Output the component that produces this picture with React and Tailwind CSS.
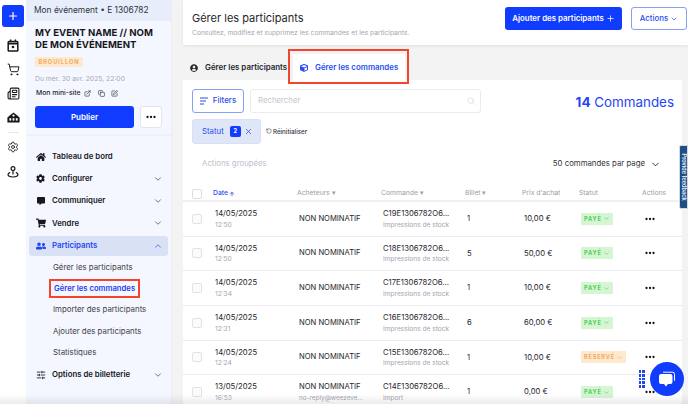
import React from "react";
import { ChevronDown, ChevronUp, Plus, ShoppingCart, Newspaper, Settings, SlidersHorizontal, ExternalLink, Copy, SquarePen, Ellipsis, X, RotateCcw, Search, ArrowUp } from "lucide-react";
import { FaHome, FaCog, FaCommentAlt, FaShoppingCart, FaUserFriends, FaUserCircle, FaCube } from "react-icons/fa";

const font = { fontFamily: '"Inter","Noto Sans",sans-serif' };

function CalIcon() {
  return (
    <svg width="12" height="13" viewBox="0 0 12 13" fill="none" stroke="#17171c" strokeWidth="1.5">
      <rect x="1.2" y="2.4" width="9.6" height="9.6" rx="0.8" />
      <path d="M1 4.6h10" strokeWidth="1.8" />
      <path d="M3.6 0.6v2.4M8.4 0.6v2.4" />
      <circle cx="6" cy="8" r="1.3" fill="#17171c" stroke="none" />
    </svg>
  );
}

function VenueIcon() {
  return (
    <svg width="13" height="11" viewBox="0 0 13 11">
      <path d="M6.5 0.4L10 3.2 12.6 5.4V10.6H0.4V5.4L3 3.2z" fill="#17171c" />
      <circle cx="6.5" cy="3.6" r="1.1" fill="#fff" />
      <rect x="2.4" y="6.2" width="1.8" height="2.4" fill="#fff" />
      <rect x="5.6" y="6.2" width="1.8" height="2.4" fill="#fff" />
      <rect x="8.8" y="6.2" width="1.8" height="2.4" fill="#fff" />
    </svg>
  );
}

function PinIcon() {
  return (
    <svg width="12" height="12" viewBox="0 0 12 12" fill="none" stroke="#17171c" strokeWidth="1.2">
      <circle cx="6" cy="2.6" r="1.9" />
      <path d="M6 4.5V8.4" />
      <path d="M3.2 6.4C1.6 7 1 7.8 1 8.6 1 10 3.2 11 6 11s5-1 5-2.4c0-.8-.6-1.6-2.2-2.2" />
    </svg>
  );
}

function NavRow({ icon, label, active, open }) {
  return (
    <div className={`h-[20px] mx-[3px] flex items-center pl-[6px] pr-[5px] rounded-[3px] whitespace-nowrap ${active ? "bg-[#d9e1f4] text-[#1f45f5]" : "text-[#17171c]"}`}>
      <span className="w-[11px] flex justify-center">{icon}</span>
      <span className="ml-[6px] flex-1 text-[7.8px] font-semibold">{label}</span>
      {open ? <ChevronUp size={10} strokeWidth={1.6} /> : <ChevronDown size={10} strokeWidth={1.6} className="text-[#333]" />}
    </div>
  );
}

function Sub({ children, active }) {
  return (
    <div className={`h-[21.4px] flex items-center pl-[27px] whitespace-nowrap ${active ? "text-[7.7px] text-[#2a3df0] font-semibold" : "text-[7.85px] text-[#3f3f46]"}`}>
      {active ? (
        <span className="h-[19px] -ml-[4px] pl-[3px] pr-[3px] flex items-center border-2 border-[#f4442e]">{children}</span>
      ) : children}
    </div>
  );
}

function Sidebar() {
  return (
    <aside className="w-[172px] shrink-0 flex bg-white border-r border-[#ececf1]">
      <div className="w-[26px] shrink-0 flex flex-col items-center bg-white">
        <div className="mt-[5px] w-[22px] h-[22px] rounded-[3px] bg-[#0f3cff] text-white flex items-center justify-center">
          <Plus size={12} strokeWidth={2.4} />
        </div>
        <div className="mt-[12px] h-[13px] flex items-center"><CalIcon /></div>
        <div className="mt-[11px] h-[13px] flex items-center text-[#17171c]"><ShoppingCart size={13} strokeWidth={1.8} /></div>
        <div className="mt-[11px] h-[13px] flex items-center text-[#17171c]"><Newspaper size={13} strokeWidth={2} /></div>
        <div className="mt-[11px] h-[13px] flex items-center"><VenueIcon /></div>
        <div className="mt-[8px] w-[11px] h-px bg-[#e8e8ec]" />
        <div className="mt-[7px] h-[13px] flex items-center text-[#17171c]"><Settings size={12} strokeWidth={1.7} /></div>
        <div className="mt-[12px] h-[13px] flex items-center"><PinIcon /></div>
      </div>
      <div className="flex-1 min-w-0 bg-[#f4f7ff] flex flex-col">
        <div className="h-[21px] bg-[#e8edfb] flex items-center pl-[8px] text-[8.4px] text-[#33343b] whitespace-nowrap">Mon événement • E 1306782</div>
        <div className="h-[115px] px-[9px] border-b-2 border-[#eff1f8]">
          <div className="mt-[6px] text-[9.6px] leading-[11.5px] font-bold text-[#17171c] whitespace-nowrap">MY EVENT NAME // NOM<br />DE MON ÉVÉNEMENT</div>
          <div className="mt-[7px] w-[48px] h-[10px] bg-[#fde8d0] rounded-[1px] flex items-center justify-center text-[5.6px] font-bold tracking-[1px] text-[#f5ab54]">BROUILLON</div>
          <div className="mt-[7px] text-[6.8px] text-[#a7a9b5]">Du mer. 30 avr. 2025, 22:00</div>
          <div className="mt-[4px] flex items-center text-[6.8px] text-[#26262c] font-medium pl-px">
            Mon mini-site
            <ExternalLink size={7} className="ml-[3px]" />
            <Copy size={7} className="ml-[7px]" />
            <SquarePen size={7} className="ml-[6px]" />
          </div>
          <div className="mt-[8px] flex gap-[6px]">
            <div className="w-[99px] h-[22px] rounded-[3px] bg-[#0f3cff] text-white text-[8px] font-semibold flex items-center justify-center">Publier</div>
            <div className="w-[22px] h-[22px] rounded-[3px] bg-white border border-[#e4e4ea] text-[#111] flex items-center justify-center">
              <Ellipsis size={12} strokeWidth={2.6} />
            </div>
          </div>
        </div>
        <div className="mt-[10.5px] flex flex-col gap-[2.3px]">
          <div className="h-[20px] mx-[3px] flex items-center pl-[6px] text-[#17171c] whitespace-nowrap">
            <span className="w-[11px] flex justify-center"><FaHome size={10} /></span>
            <span className="ml-[6px] text-[7.8px] font-semibold">Tableau de bord</span>
          </div>
          <NavRow icon={<FaCog size={9} />} label="Configurer" />
          <NavRow icon={<FaCommentAlt size={8} />} label="Communiquer" />
          <NavRow icon={<FaShoppingCart size={10} />} label="Vendre" />
          <NavRow icon={<FaUserFriends size={10} />} label="Participants" active open />
        </div>
        <div className="mt-[1px]">
          <Sub>Gérer les participants</Sub>
          <Sub active>Gérer les commandes</Sub>
          <Sub>Importer des participants</Sub>
          <Sub>Ajouter des participants</Sub>
          <Sub>Statistiques</Sub>
        </div>
        <div className="mt-[1px]"><NavRow icon={<SlidersHorizontal size={10} />} label="Options de billetterie" /></div>
      </div>
    </aside>
  );
}

function Header() {
  return (
    <header className="h-[45px] bg-white flex items-start justify-between shadow-[0_1px_3px_rgba(0,0,0,0.08)] relative">
      <div className="pl-[9px]">
        <div className="mt-[11px] text-[11px] leading-[15px] text-[#26262c] whitespace-nowrap">Gérer les participants</div>
        <div className="mt-[3px] text-[6.7px] leading-[9px] text-[#a4a5b0] whitespace-nowrap">Consultez, modifiez et supprimez les commandes et les participants.</div>
      </div>
      <div className="mt-[7px] mr-[1px] flex gap-[9px]">
        <div className="w-[117px] h-[23px] rounded-[3px] bg-[#0f3cff] text-white text-[7.9px] font-semibold flex items-center justify-center gap-[2px] whitespace-nowrap">Ajouter des participants<Plus size={9} /></div>
        <div className="w-[56px] h-[23px] rounded-[3px] border border-[#86a0f8] bg-white text-[#2a4df0] text-[7.9px] font-medium flex items-center justify-center gap-[2px]">Actions<ChevronDown size={8} /></div>
      </div>
    </header>
  );
}

const head = "-ml-[2px] text-[6.8px] text-[#9b9ca8] whitespace-nowrap";

const rows = [
  ["14/05/2025", "12:50", "C19E1306782O6...", "Impressions de stock", "1", "10,00 €", "PAYÉ", ""],
  ["14/05/2025", "12:50", "C18E1306782O6...", "Impressions de stock", "5", "50,00 €", "PAYÉ", ""],
  ["14/05/2025", "12:34", "C17E1306782O6...", "Impressions de stock", "1", "10,00 €", "PAYÉ", ""],
  ["14/05/2025", "12:31", "C16E1306782O6...", "Impressions de stock", "6", "60,00 €", "PAYÉ", ""],
  ["14/05/2025", "12:24", "C15E1306782O6...", "Impressions de stock", "1", "10,00 €", "RÉSERVÉ", ""],
  ["13/05/2025", "16:53", "C14E1306782O6...", "Import", "1", "0,00 €", "PAYÉ", "no-reply@weezeve..."],
];

const cols = "grid grid-cols-[32px_84px_84px_84px_57px_57px_63px_1fr] items-center";

function Row({ r }) {
  const paid = r[6] === "PAYÉ";
  return (
    <div className={`${cols} h-[34.67px] border-b border-[#ebebef]`}>
      <div className="pl-[9px]"><span className="block w-[10px] h-[10px] rounded-[2px] border border-[#e2e2e8] bg-[#fbfbfc]" /></div>
      <div>
        <div className="text-[7.7px] leading-[10px] text-[#26262c]">{r[0]}</div>
        <div className="mt-[1.5px] text-[6.6px] leading-[8px] text-[#a4a5b0]">{r[1]}</div>
      </div>
      <div>
        <div className="text-[7.6px] leading-[10px] text-[#26262c] whitespace-nowrap">NON NOMINATIF</div>
        {r[7] && <div className="mt-[1.5px] text-[6.4px] leading-[8px] text-[#a4a5b0] whitespace-nowrap">{r[7]}</div>}
      </div>
      <div>
        <div className="text-[7.7px] leading-[10px] text-[#26262c] whitespace-nowrap">{r[2]}</div>
        <div className="mt-[1.5px] text-[6.6px] leading-[8px] text-[#a4a5b0] whitespace-nowrap">{r[3]}</div>
      </div>
      <div className="text-[7.7px] text-[#26262c]">{r[4]}</div>
      <div className="text-[7.7px] text-[#26262c]">{r[5]}</div>
      <div className="flex">
        <span className={`flex items-center h-[12px] rounded-[1px] px-[3px] text-[5.6px] font-bold tracking-[0.8px] ${paid ? "bg-[#d5f5d3] text-[#4cd05a]" : "bg-[#fde8d0] text-[#f5ab54]"}`}>
          {r[6]}<ChevronDown size={7} className="ml-[1px]" />
        </span>
      </div>
      <div className="text-[#111]"><Ellipsis size={12} strokeWidth={2.6} /></div>
    </div>
  );
}

export default function App() {
  return (
    <div className="relative w-[688px] h-[404px] overflow-hidden flex bg-[#f3f3f4]" style={font}>
      <Sidebar />
      <main className="flex-1 min-w-0">
        <div className="ml-[11px] bg-white">
          <Header />
        </div>
        <div className="ml-[11px] mr-[6px]">
          <div className="h-[35px] flex items-end text-[7.9px] whitespace-nowrap">
            <div className="h-[26px] w-[110px] pt-[1px] flex items-center pl-[7px] font-semibold text-[#26262c]">
              <FaUserCircle size={8} className="mr-[7px]" />
              Gérer les participants
            </div>
            <div className="h-[26px] w-[112px] pt-[1px] bg-white flex items-center pl-[7px] font-semibold text-[#2a4df0]">
              <FaCube size={8} className="mr-[7px]" />
              Gérer les commandes
            </div>
          </div>
          <div className="bg-white h-[330px]">
            <div className="flex items-start pt-[9px] pl-[9px] pr-[8px]">
              <div className="w-[52px] h-[24px] rounded-[3px] border border-[#86a0f8] text-[#2a4df0] font-medium text-[7.9px] flex items-center justify-center gap-[5px]">
                <svg width="8" height="8" viewBox="0 0 8 8" stroke="currentColor" strokeWidth="1.2"><path d="M0 1h8M0 4h6M0 7h4" /></svg>Filters
              </div>
              <div className="ml-[6px] w-[231px] h-[24px] rounded-[3px] border border-[#ebebef] flex items-center justify-between pl-[7px] pr-[5px] text-[7.8px] text-[#c5c6d0]">
                Rechercher<Search size={8} className="text-[#d8d8de]" />
              </div>
              <div className="ml-auto mt-[5px] text-[13.4px] leading-[17px] text-[#1f45f5] whitespace-nowrap"><span className="font-bold">14</span> Commandes</div>
            </div>
            <div className="mt-[6px] ml-[9px] flex items-center">
              <div className="w-[69px] h-[25px] bg-[#dfe6f8] border border-[#d9e1f6] rounded-[3px] flex items-center pl-[9px] text-[7.8px] text-[#2a4df0]">
                Statut
                <span className="ml-[6px] w-[11px] h-[11px] rounded-[2px] bg-[#0f3cff] text-white text-[5.6px] font-bold flex items-center justify-center">2</span>
                <X size={9} className="ml-[3px]" />
              </div>
              <div className="ml-[5px] flex items-center text-[6.2px] font-medium text-[#33343b]">
                <RotateCcw size={6} className="mr-[1px]" />Réinitialiser
              </div>
            </div>
            <div className="mt-[13px] flex items-center pl-[19px] pr-[21px] h-[14px] text-[7.8px]">
              <span className="text-[#c0c1cb]">Actions groupées</span>
              <span className="ml-auto text-[#33343b]">50 commandes par page</span>
              <ChevronDown size={11} strokeWidth={2} className="ml-[5px] text-[#222]" />
            </div>
            <div className={`${cols} mt-[16px] h-[15px] border-b-2 border-[#f0f0f3]`}>
              <div className="pl-[9px]"><span className="block w-[10px] h-[10px] rounded-[2px] border border-[#dcdce2]" /></div>
              <div className="-ml-[2px] text-[6.8px] font-medium text-[#2a4df0] flex items-center">Date<ArrowUp size={6} strokeWidth={3} className="ml-[1px]" /></div>
              <div className={head}>Acheteurs ▾</div>
              <div className={head}>Commande ▾</div>
              <div className={head}>Billet ▾</div>
              <div className={head}>Prix d'achat</div>
              <div className={head}>Statut</div>
              <div className={head}>Actions</div>
            </div>
            {rows.map((r, i) => <Row key={i} r={r} />)}
          </div>
        </div>
      </main>
      <div className="absolute left-[288px] top-[49px] w-[121px] h-[35px] border-2 border-[#f4442e] pointer-events-none" />
      <div className="absolute left-[679px] top-[145px] w-[9px] h-[64px] bg-[#1f4d86] border border-[#d7d7dc] rounded-l-[2px] overflow-hidden flex items-center justify-center">
        <span className="text-[5.5px] font-bold text-[#d9e4f2] whitespace-nowrap rotate-90">Provide feedback</span>
      </div>
      <div className="absolute left-[638.5px] top-[370px] grid grid-cols-2 gap-[1px]">
        {Array.from({ length: 10 }).map((_, i) => <span key={i} className="w-[2.8px] h-[2.8px] bg-[#1f45f5]" />)}
      </div>
      <div className="absolute left-[650px] top-[362px] w-[34px] h-[34px] rounded-full bg-[#0f3cff] flex items-center justify-center">
        <svg width="20" height="18" viewBox="0 0 20 18">
          <path d="M6 2.2h9.5A2 2 0 0 1 17.5 4.2v6.5" fill="none" stroke="#fff" strokeWidth="1" />
          <path d="M4 4h9.5a2 2 0 0 1 2 2v6a2 2 0 0 1-2 2h-2.5l-2 2.4L7 14H4a2 2 0 0 1-2-2V6a2 2 0 0 1 2-2z" fill="#fff" />
        </svg>
      </div>
      <div className="absolute left-0 bottom-0 w-[688px] h-[10px] bg-gradient-to-t from-[rgba(0,0,0,0.08)] to-transparent pointer-events-none" />
    </div>
  );
}
